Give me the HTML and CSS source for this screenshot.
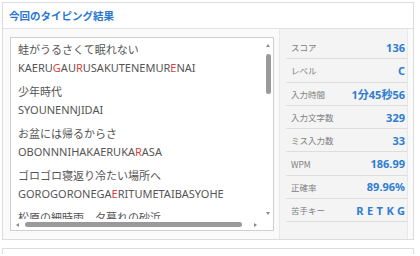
FILE: index.html
```html
<!DOCTYPE html>
<html lang="ja">
<head>
<meta charset="utf-8">
<link rel="stylesheet" href="styles.css">
</head>
<body>
<div class="card">
  <div class="card-header">今回のタイピング結果</div>
  <div class="card-body">
    <div class="textbox">
      <div class="text-content">
        <div class="entry">
          <div class="jp">蛙がうるさくて眠れない</div>
          <div class="romaji">KAERU<span class="miss">G</span>AU<span class="miss">R</span>USAKUTENEMUR<span class="miss">E</span>NAI</div>
        </div>
        <div class="entry">
          <div class="jp">少年時代</div>
          <div class="romaji">SYOUNENNJIDAI</div>
        </div>
        <div class="entry">
          <div class="jp">お盆には帰るからさ</div>
          <div class="romaji">OBONNNIHAKAERUKA<span class="miss">R</span>ASA</div>
        </div>
        <div class="entry">
          <div class="jp">ゴロゴロ寝返り冷たい場所へ</div>
          <div class="romaji">GOROGORONEGA<span class="miss">E</span>RITUMETAIBASYOHE</div>
        </div>
        <div class="entry">
          <div class="jp">松原の細時雨　夕暮れの砂浜</div>
        </div>
      </div>
      <div class="vscroll">
        <span class="arrow up"></span>
        <div class="vtrack"><div class="vthumb"></div></div>
        <span class="arrow down"></span>
      </div>
      <div class="hscroll">
        <span class="arrow left"></span>
        <div class="htrack"><div class="hthumb"></div></div>
        <span class="arrow right"></span>
      </div>
      <div class="corner"></div>
    </div>
    <div class="stats">
      <div class="stat"><span class="label">スコア</span><span class="value">136</span></div>
      <div class="stat"><span class="label">レベル</span><span class="value">C</span></div>
      <div class="stat"><span class="label">入力時間</span><span class="value">1分45秒56</span></div>
      <div class="stat"><span class="label">入力文字数</span><span class="value">329</span></div>
      <div class="stat"><span class="label">ミス入力数</span><span class="value">33</span></div>
      <div class="stat"><span class="label">WPM</span><span class="value">186.99</span></div>
      <div class="stat"><span class="label">正確率</span><span class="value">89.96%</span></div>
      <div class="stat"><span class="label">苦手キー</span><span class="value keys">RETKG</span></div>
    </div>
  </div>
</div>
<div class="card next"></div>
</body>
</html>
```
FILE: styles.css
```css
html, body {
  margin: 0;
  padding: 0;
  background: #ffffff;
}
body {
  font-family: "Noto Sans", "Noto Sans CJK JP", sans-serif;
  overflow: hidden;
  height: 256px;
}
.card {
  margin: 2px 0 0 2px;
  width: 410px;
  border: 1px solid #dcdcdc;
  background: #fafafa;
}
.card.next {
  margin-top: 8px;
  height: 5px;
  border-bottom: none;
  background: #ffffff;
}
.card-header {
  height: 25px;
  line-height: 25px;
  padding-left: 6px;
  background: #ffffff;
  border-bottom: 1px solid #e2e2e2;
  color: #2a78d0;
  font-family: "Noto Sans CJK JP", sans-serif;
  font-weight: 700;
  font-size: 10.5px;
}
.card-body {
  display: flex;
  height: 210px;
}
.textbox {
  margin: 8px 0 8px 7px;
  width: 262px;
  border: 1px solid #cfcfcf;
  background: #ffffff;
  display: grid;
  grid-template-columns: 1fr 10px;
  grid-template-rows: 1fr 11px;
  overflow: hidden;
}
.text-content {
  overflow: hidden;
  padding: 3px 0 0 7px;
  color: #555555;
}
.entry {
  margin-bottom: 7px;
}
.jp {
  font-family: "Noto Sans CJK JP", sans-serif;
  font-size: 11px;
  line-height: 17.5px;
  white-space: nowrap;
}
.romaji {
  font-family: "Noto Sans", "Noto Sans CJK JP", sans-serif;
  font-size: 11px;
  line-height: 17.5px;
  white-space: nowrap;
  color: #555555;
}
.miss {
  color: #e0403c;
}
.vscroll {
  display: flex;
  flex-direction: column;
  align-items: center;
  padding: 6px 0 4px;
}
.vtrack {
  flex: 1;
  padding-top: 7px;
}
.vthumb {
  width: 5px;
  height: 40px;
  border-radius: 3px;
  background: #9a9a9a;
}
.hscroll {
  display: flex;
  align-items: center;
  padding: 0 6px 0 5px;
}
.htrack {
  flex: 1;
  padding: 0 12px 0 6px;
}
.hthumb {
  height: 5px;
  border-radius: 3px;
  background: #9a9a9a;
}
.arrow {
  width: 0;
  height: 0;
  display: block;
}
.arrow.up {
  border-left: 2.5px solid transparent;
  border-right: 2.5px solid transparent;
  border-bottom: 3px solid #8a8a8a;
}
.arrow.down {
  border-left: 2.5px solid transparent;
  border-right: 2.5px solid transparent;
  border-top: 3px solid #8a8a8a;
}
.arrow.left {
  border-top: 2.5px solid transparent;
  border-bottom: 2.5px solid transparent;
  border-right: 3px solid #8a8a8a;
}
.arrow.right {
  border-top: 2.5px solid transparent;
  border-bottom: 2.5px solid transparent;
  border-left: 3px solid #8a8a8a;
}
.stats {
  margin-left: 5px;
  width: 127px;
  background: #f4f4f4;
  border-left: 1px solid #e8e8e8;
  border-right: 1px solid #e8e8e8;
  padding-top: 7px;
}
.stat {
  display: flex;
  justify-content: space-between;
  align-items: center;
  height: 22.3px;
  margin: 0 0 0 6px;
  padding: 0 2px 0 5px;
  border-bottom: 1px solid #dddddd;
}
.label {
  font-family: "Noto Sans CJK JP", sans-serif;
  font-size: 8.5px;
  color: #808080;
}
.value {
  font-family: "Noto Sans", "Noto Sans CJK JP", sans-serif;
  font-weight: 700;
  font-size: 11px;
  color: #2f7dd1;
}
.value.keys {
  letter-spacing: 3.5px;
  margin-right: -3.5px;
}
```
